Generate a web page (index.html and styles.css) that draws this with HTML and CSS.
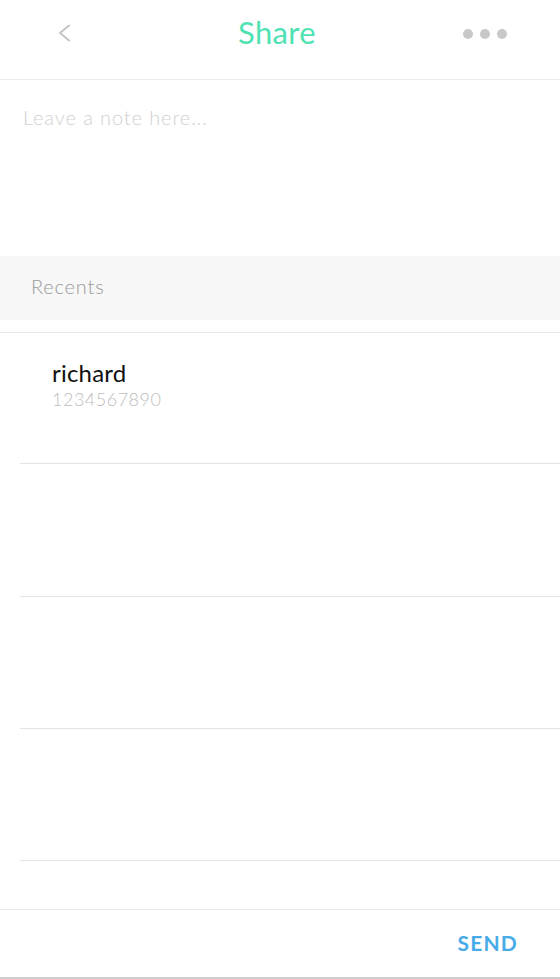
FILE: index.html
```html
<!DOCTYPE html>
<html>
<head>
<meta charset="utf-8">
<link rel="stylesheet" href="styles.css">
</head>
<body>
<div class="app">
  <header class="topbar">
    <button class="icon-btn back" aria-label="Back">
      <svg width="14" height="18" viewBox="0 0 14 18"><path d="M12 1.5 L3 9 L12 16.5" fill="none" stroke="#c4c4c4" stroke-width="2" stroke-linecap="round" stroke-linejoin="round"/></svg>
    </button>
    <h1 class="title">Share</h1>
    <div class="dots"><span></span><span></span><span></span></div>
  </header>
  <div class="note">Leave a note here...</div>
  <div class="section-head">Recents</div>
  <div class="list">
    <div class="row">
      <div class="name">richard</div>
      <div class="phone">1234567890</div>
    </div>
    <div class="row"></div>
    <div class="row"></div>
    <div class="row"></div>
  </div>
  <footer class="footer">
    <span class="send">SEND</span>
  </footer>
</div>
</body>
</html>
```
FILE: styles.css
```css
* { box-sizing: border-box; }
html, body { margin: 0; padding: 0; background: #fff; }
body { font-family: Lato, "Open Sans", sans-serif; }
.app {
  width: 560px;
  height: 979px;
  display: flex;
  flex-direction: column;
}
.topbar {
  height: 80px;
  border-bottom: 1px solid #ebebeb;
  display: flex;
  align-items: center;
  justify-content: space-between;
  padding: 0 53px 16px 57px;
}
.icon-btn {
  border: 0;
  background: none;
  padding: 0;
  width: 16px;
  height: 18px;
  display: flex;
  align-items: center;
  margin-top: 2px;
}
.title {
  margin: 0;
  font-weight: 400;
  font-size: 31px;
  color: #4fe2b3;
  letter-spacing: 0.3px;
  padding-left: 18px;
}
.dots { display: flex; gap: 7px; padding-top: 4px; }
.dots span {
  width: 10px;
  height: 10px;
  border-radius: 50%;
  background: #c8c8c8;
}
.note {
  height: 176px;
  padding: 25px 23px;
  font-size: 20px;
  letter-spacing: 0.9px;
  color: #d0d0d0;
  font-weight: 300;
}
.section-head {
  height: 64px;
  background: #f7f7f7;
  display: flex;
  align-items: center;
  padding: 0 0 4px 31px;
  font-size: 20px;
  letter-spacing: 0.8px;
  color: #9a9a9a;
  font-weight: 300;
}
.list {
  flex: 1;
  margin-top: 12px;
  border-top: 1px solid #e8e8e8;
}
.row {
  height: 132px;
  margin-left: 20px;
  border-bottom: 1px solid #e4e4e4;
  padding: 26px 0 0 32px;
}
.row:first-child { height: 131px; }
.row:nth-child(2) { height: 133px; }
.name {
  font-size: 24px;
  line-height: 28px;
  color: #111;
  letter-spacing: 0.2px;
}
.phone {
  font-size: 18px;
  line-height: 22px;
  color: #bdbdbd;
  font-weight: 300;
  letter-spacing: 0.5px;
  margin-top: 1px;
}
.footer {
  height: 70px;
  border-top: 1px solid #ebebeb;
  border-bottom: 2px solid #cfcfcf;
  display: flex;
  align-items: center;
  justify-content: flex-end;
  padding: 0 42px 2px 0;
}
.send {
  font-weight: 700;
  font-size: 21px;
  letter-spacing: 1.2px;
  color: #47abe8;
}
```
